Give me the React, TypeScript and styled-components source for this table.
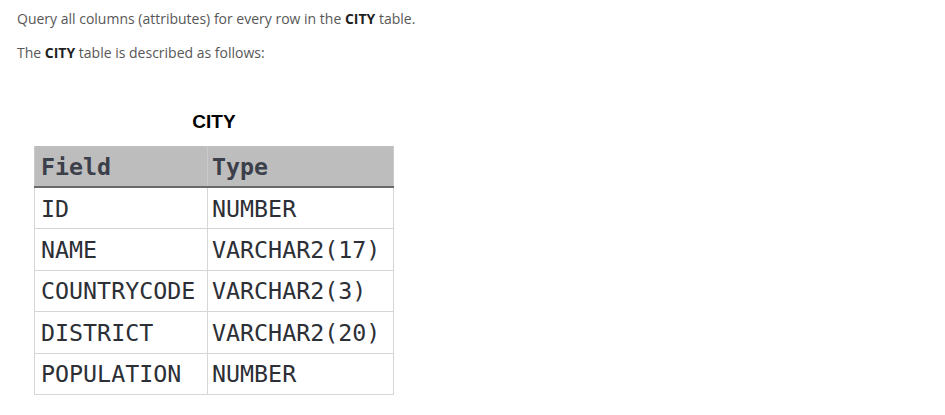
import React from "react";
import styled, { createGlobalStyle } from "styled-components";

const Global = createGlobalStyle`
  html, body { margin: 0; padding: 0; background: #ffffff; }
`;

const Page = styled.div`
  padding: 9px 17px 0 17px;
  font-family: "Open Sans", "Noto Sans", sans-serif;
  font-size: 14px;
  color: #575757;
`;

const Para = styled.p`
  margin: 0 0 15px 0;
  line-height: 19px;
  b { color: #1f1f1f; font-weight: 700; }
`;

const Figure = styled.div`
  margin: 41px 0 0 17px;
  width: 360px;
  display: flex;
  flex-direction: column;
  align-items: stretch;
`;

const Caption = styled.div`
  text-align: center;
  font-family: "Liberation Sans", Arial, sans-serif;
  font-weight: 700;
  font-size: 19px;
  color: #000;
  height: 37px;
  line-height: 37px;
  margin-bottom: 6px;
`;

const Table = styled.table`
  border-collapse: collapse;
  width: 360px;
  font-family: "DejaVu Sans Mono", Menlo, monospace;
  font-size: 23.3px;
  color: #2d2f36;
`;

const Th = styled.th<{ $first?: boolean }>`
  background: #bdbdbd;
  text-align: left;
  font-weight: 700;
  color: #3b3f4a;
  height: 40px;
  padding: 0 0 0 ${(p) => (p.$first ? 6 : 4)}px;
  border-left: 1px solid #c9c9c9;
  border-right: 1px solid #c9c9c9;
  border-bottom: 2px solid #6a6a6a;
  ${(p) => (p.$first ? "width: 166px;" : "")}
`;

const Td = styled.td<{ $first?: boolean }>`
  height: 40.4px;
  padding: 0 0 0 ${(p) => (p.$first ? 6 : 4)}px;
  border: 1px solid #d6d6d6;
  white-space: nowrap;
`;

const rows: [string, string][] = [
  ["ID", "NUMBER"],
  ["NAME", "VARCHAR2(17)"],
  ["COUNTRYCODE", "VARCHAR2(3)"],
  ["DISTRICT", "VARCHAR2(20)"],
  ["POPULATION", "NUMBER"],
];

export default function App() {
  return (
    <>
      <Global />
      <Page>
        <Para>
          Query all columns (attributes) for every row in the <b>CITY</b> table.
        </Para>
        <Para>
          The <b>CITY</b> table is described as follows:
        </Para>
        <Figure>
          <Caption>CITY</Caption>
          <Table>
            <thead>
              <tr>
                <Th $first>Field</Th>
                <Th>Type</Th>
              </tr>
            </thead>
            <tbody>
              {rows.map(([f, t]) => (
                <tr key={f}>
                  <Td $first>{f}</Td>
                  <Td>{t}</Td>
                </tr>
              ))}
            </tbody>
          </Table>
        </Figure>
      </Page>
    </>
  );
}
